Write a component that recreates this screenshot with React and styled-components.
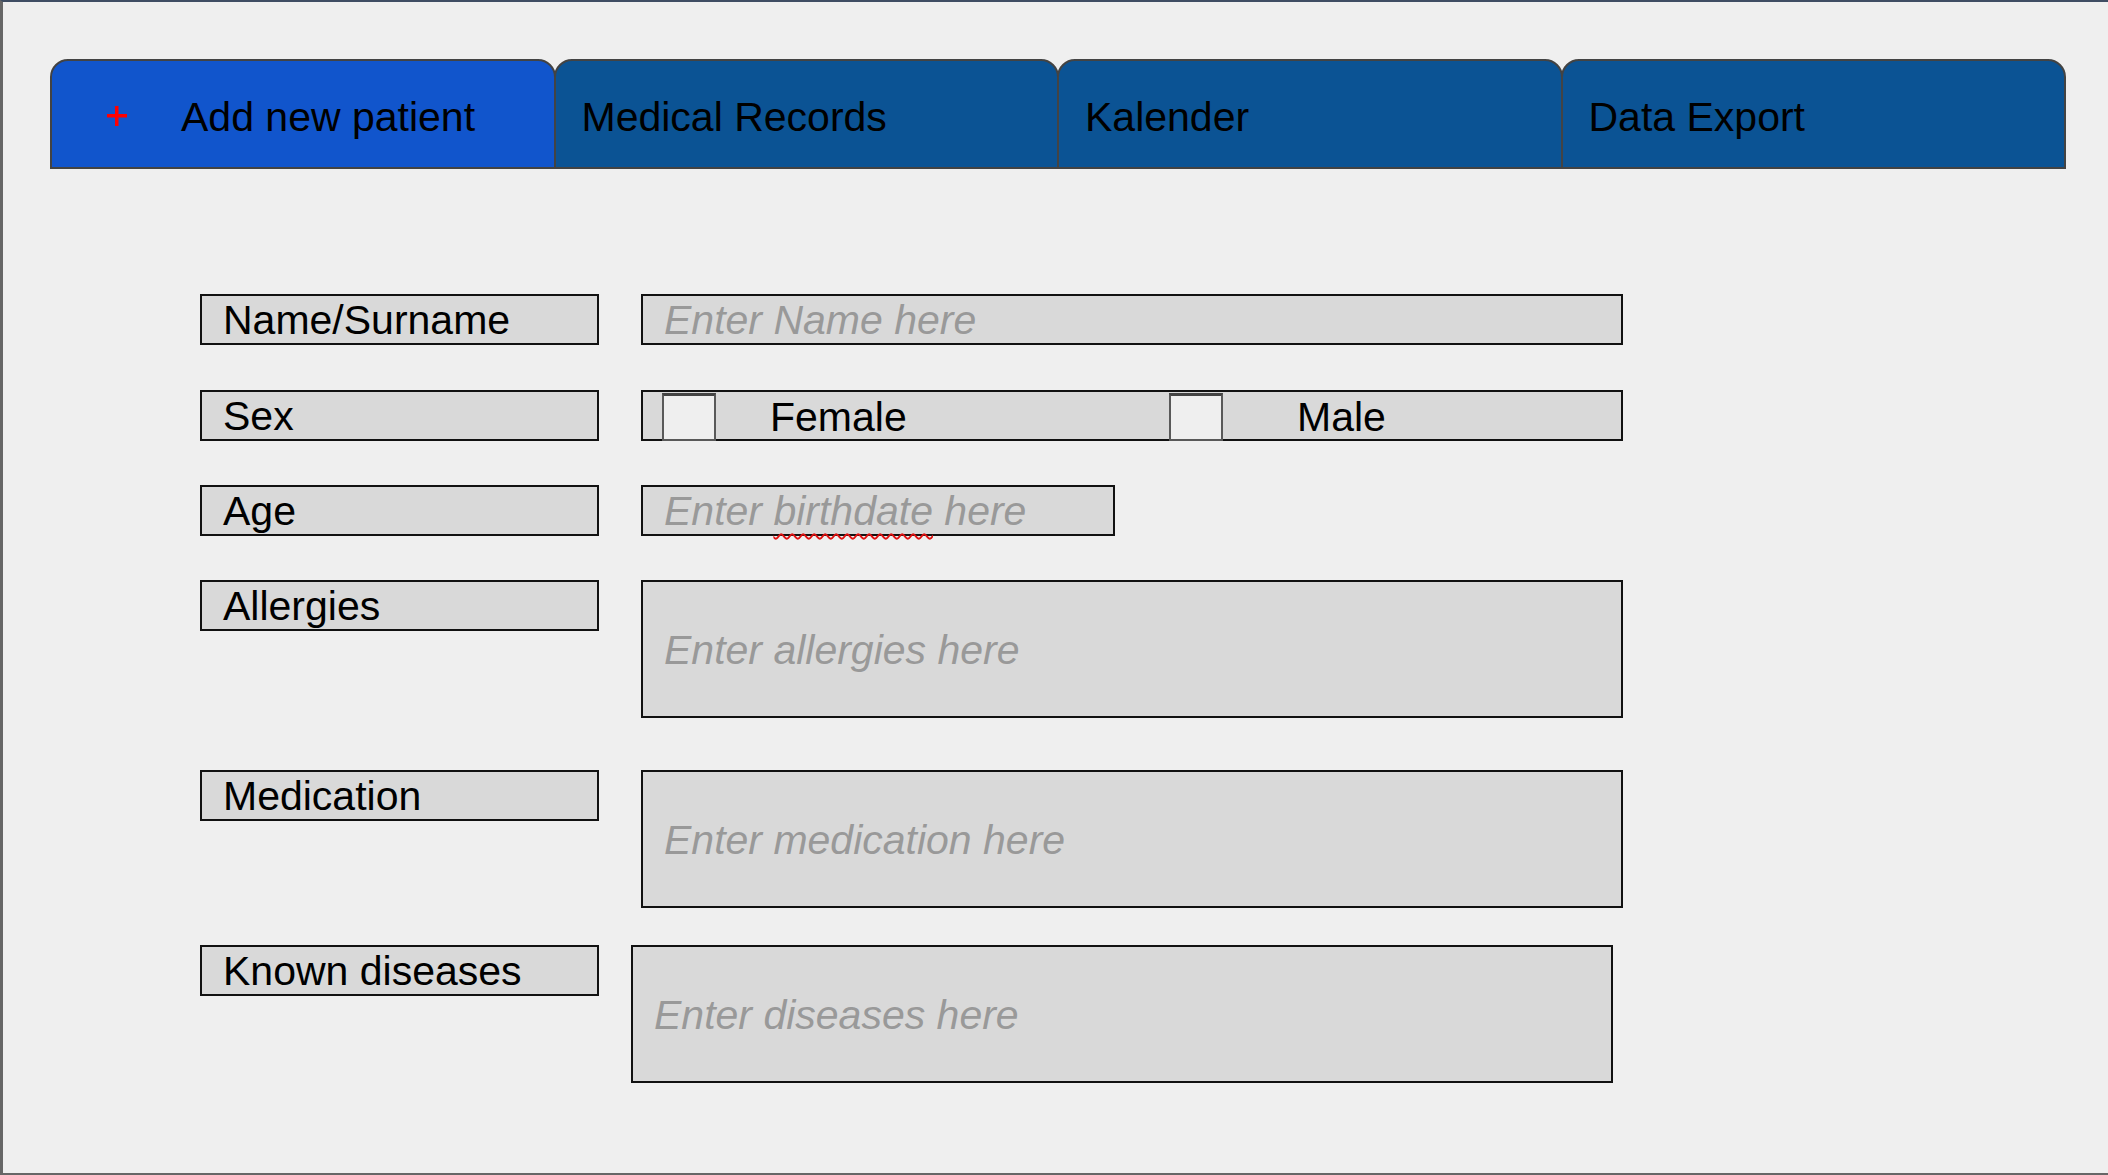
import React from "react";
import styled, { createGlobalStyle } from "styled-components";

const tabs = [
  { id: "add", title: "Add new patient", active: true },
  { id: "records", title: "Medical Records" },
  { id: "calendar", title: "Kalender" },
  { id: "export", title: "Data Export" },
];

const fields = [
  { id: "name", label: "Name/Surname", kind: "input", placeholder: "Enter Name here", mt: 0 },
  { id: "sex", label: "Sex", kind: "sex", mt: 45 },
  { id: "age", label: "Age", kind: "age", mt: 44 },
  { id: "allergies", label: "Allergies", kind: "area", placeholder: "Enter allergies here", mt: 44 },
  { id: "medication", label: "Medication", kind: "area", placeholder: "Enter medication here", mt: 52 },
  { id: "diseases", label: "Known diseases", kind: "area", placeholder: "Enter diseases here", mt: 37, shift: -10 },
];

function PlusIcon() {
  return (
    <svg width="20" height="20" viewBox="0 0 20 20">
      <rect x="8" y="0" width="3.5" height="20" fill="#ff0000" />
      <rect x="0" y="8" width="20" height="3.5" fill="#ff0000" />
    </svg>
  );
}

function SexField() {
  return (
    <SexBox>
      <Choice $width={507}>
        <Checkbox />
        <ChoiceText $gap={54}>Female</ChoiceText>
      </Choice>
      <Choice>
        <Checkbox />
        <ChoiceText $gap={74}>Male</ChoiceText>
      </Choice>
    </SexBox>
  );
}

function FieldFor({ field }) {
  if (field.kind === "sex") return <SexField />;
  if (field.kind === "age") {
    return (
      <Field $width={474}>
        Enter <Misspelled>birthdate</Misspelled> here
      </Field>
    );
  }
  if (field.kind === "area") {
    return (
      <Field $tall $shift={field.shift}>
        {field.placeholder}
      </Field>
    );
  }
  return <Field>{field.placeholder}</Field>;
}

function App() {
  return (
    <React.Fragment>
      <GlobalStyle />
      <Frame>
        <TabBar>
          {tabs.map((tab) => (
            <Tab key={tab.id} $active={tab.active}>
              {tab.active && (
                <PlusSlot>
                  <PlusIcon />
                </PlusSlot>
              )}
              {tab.title}
            </Tab>
          ))}
        </TabBar>

        <Form>
          {fields.map((field) => (
            <Row key={field.id} $mt={field.mt}>
              <Label>{field.label}</Label>
              <FieldFor field={field} />
            </Row>
          ))}
        </Form>
      </Frame>
    </React.Fragment>
  );
}

const GlobalStyle = createGlobalStyle`
  html, body {
    margin: 0;
    padding: 0;
    background: #efefef;
  }
  body {
    font-family: "Liberation Sans", Arial, sans-serif;
  }
`;

const Frame = styled.div`
  position: relative;
  box-sizing: border-box;
  width: 2108px;
  height: 1175px;
  overflow: hidden;
  background: #efefef;
  border-top: 2px solid #3f4d63;
  border-left: 3px solid #666666;
  border-bottom: 2px solid #666666;
  padding: 57px 0 0 47px;

  &::before {
    content: "";
    position: absolute;
    left: -3px;
    top: 0;
    width: 3px;
    height: 383px;
    background: #3d74d6;
  }
`;

const TabBar = styled.div`
  display: flex;
`;

const Tab = styled.div`
  box-sizing: border-box;
  flex: 0 0 505.5px;
  height: 110px;
  display: flex;
  align-items: center;
  padding: 6px 0 0 ${({ $active }) => ($active ? "55px" : "26px")};
  background: ${({ $active }) => ($active ? "#1155cc" : "#0b5394")};
  border: 2px solid #434343;
  border-radius: 18px 18px 0 0;
  font-size: 41px;
  color: #000000;
  white-space: nowrap;

  & + & {
    margin-left: -2px;
  }
`;

const PlusSlot = styled.span`
  display: inline-flex;
  width: 20px;
  height: 20px;
  margin: -3px 54px 0 0;
`;

const Form = styled.div`
  display: flex;
  flex-direction: column;
  margin: 125px 0 0 150px;
`;

const Row = styled.div`
  display: flex;
  align-items: flex-start;
  gap: 42px;
  margin-top: ${({ $mt }) => $mt}px;
`;

const Label = styled.div`
  box-sizing: border-box;
  width: 399px;
  height: 51px;
  display: flex;
  align-items: center;
  padding: 2px 0 0 21px;
  background: #d9d9d9;
  border: 2px solid #111111;
  font-size: 41px;
  color: #000000;
  white-space: nowrap;
`;

const Field = styled.div`
  box-sizing: border-box;
  width: ${({ $width }) => ($width ? `${$width}px` : "982px")};
  height: ${({ $tall }) => ($tall ? "138px" : "51px")};
  margin-left: ${({ $shift }) => $shift || 0}px;
  display: flex;
  align-items: center;
  padding: 2px 0 0 21px;
  background: #d9d9d9;
  border: 2px solid #111111;
  font-size: 41px;
  font-style: italic;
  color: #999999;
  white-space: pre;
`;

const Misspelled = styled.span`
  text-decoration: underline wavy #e01010;
  text-decoration-thickness: 1.5px;
  text-underline-offset: 8px;
  text-decoration-skip-ink: none;
`;

const SexBox = styled.div`
  box-sizing: border-box;
  width: 982px;
  height: 51px;
  display: flex;
  align-items: flex-start;
  padding-left: 19px;
  background: #d9d9d9;
  border: 2px solid #111111;
  font-size: 41px;
  color: #000000;
`;

const Choice = styled.div`
  display: flex;
  align-items: center;
  height: 47px;
  width: ${({ $width }) => ($width ? `${$width}px` : "auto")};
`;

const Checkbox = styled.span`
  box-sizing: border-box;
  display: block;
  width: 54px;
  height: 48px;
  margin-top: 1px;
  align-self: flex-start;
  background: #efefef;
  border: 2px solid #595959;
  border-top-width: 3px;
  border-top-color: #434343;
`;

const ChoiceText = styled.span`
  margin-left: ${({ $gap }) => $gap}px;
  padding-top: 4px;
`;

export default App;
